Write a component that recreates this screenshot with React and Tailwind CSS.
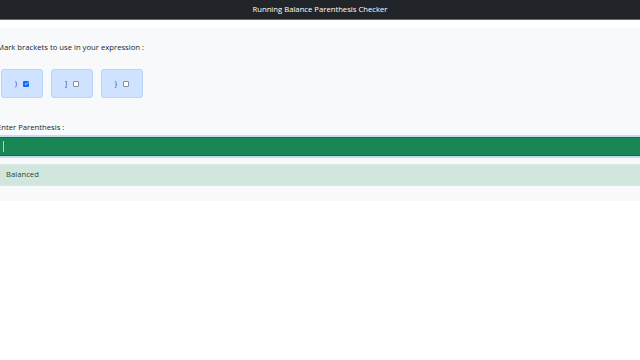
import React, { useState } from "react";

export default function App() {
  const [checks] = useState([true, false, false]);
  const brackets = [")", "]", "}"];
  return (
    <div className="w-[640px] h-[360px] bg-white overflow-hidden" style={{ fontFamily: '"Open Sans", "Noto Sans", sans-serif' }}>
      <div className="h-[20px] bg-[#212529] border-b border-[#6c6c6c] flex items-center justify-center text-white text-[7.7px]">
        Running Balance Parenthesis Checker
      </div>
      <div className="h-[8px]" />
      <div className="bg-[#f8f9fa] h-[173px] ml-[-3px] pt-[14px] text-[#212529]">
        <div className="text-[7.7px] leading-[10px]">Mark brackets to use in your expression :</div>
        <div className="flex gap-[8px] mt-[17px] ml-[4px]">
          {brackets.map((b, i) => (
            <div key={i} className="w-[42px] h-[29px] rounded-[3px] bg-[#cfe2ff] border border-[#b6d4fe] flex items-center justify-center gap-[6px] text-[7.7px] text-[#495057]">
              <span>{b}</span>
              {checks[i] ? (
                <span className="w-[6px] h-[6px] rounded-[1px] bg-[#0d6efd] flex items-center justify-center">
                  <svg viewBox="0 0 8 8" className="w-[5px] h-[5px]"><path d="M1.5 4.2 L3.2 5.8 L6.5 2.2" fill="none" stroke="white" strokeWidth="1.3" /></svg>
                </span>
              ) : (
                <span className="w-[6px] h-[6px] rounded-[1px] bg-white border border-[#8a8f95]" />
              )}
            </div>
          ))}
        </div>
        <div className="text-[7.7px] leading-[10px] mt-[24px]">Enter Parenthesis :</div>
        <div className="mt-[3px] ml-[3px] h-[23px] bg-[#c3dcef] py-[2px]">
          <div className="h-full bg-[#198754] border-y border-[#146c43] flex items-center pl-[3px]">
            <span className="w-[1px] h-[11px] bg-[#9fdcb9]" />
          </div>
        </div>
        <div className="mt-[6px] ml-[3px] h-[22px] bg-[#d1e7dd] border-y border-[#dce9e3] flex items-center pl-[6px] text-[7.7px] text-[#2b4a3c]">
          Balanced
        </div>
      </div>
    </div>
  );
}
